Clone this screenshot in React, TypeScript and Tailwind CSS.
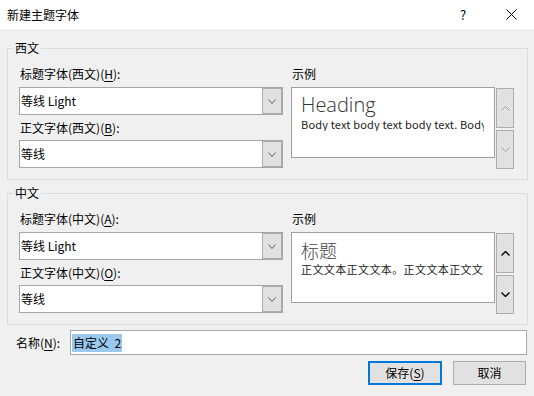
import React from "react";

function ChevronDown({ color = "#5a5a5a", w = 8, h = 5, sw = 1 }: { color?: string; w?: number; h?: number; sw?: number }) {
  return (
    <svg width={w} height={h} viewBox={`0 0 ${w} ${h}`} fill="none">
      <path d={`M0.5 0.5 L${w / 2} ${h - 0.5} L${w - 0.5} 0.5`} stroke={color} strokeWidth={sw} />
    </svg>
  );
}

function ChevronUp({ color = "#5a5a5a", w = 8, h = 5, sw = 1 }: { color?: string; w?: number; h?: number; sw?: number }) {
  return (
    <svg width={w} height={h} viewBox={`0 0 ${w} ${h}`} fill="none">
      <path d={`M0.5 ${h - 0.5} L${w / 2} 0.5 L${w - 0.5} ${h - 0.5}`} stroke={color} strokeWidth={sw} />
    </svg>
  );
}

function Combo({ value }: { value: string }) {
  return (
    <div className="flex h-[28px] border border-[#a6a6a6] bg-white">
      <div className="flex flex-1 items-center pl-[1px] text-[12px] leading-[16px] text-black">{value}</div>
      <div className="flex w-[20px] items-center justify-center border border-[#adadad] bg-[#e1e1e1]">
        <ChevronDown />
      </div>
    </div>
  );
}

function Label({ text, k, rest }: { text: string; k: string; rest: string }) {
  return (
    <div className="pl-[1px] text-[12px] leading-[16px] text-black whitespace-nowrap">
      {text}(<span className="underline underline-offset-2">{k}</span>){rest}
    </div>
  );
}

function Group({
  title,
  l1,
  k1,
  l2,
  k2,
  v1,
  v2,
  heading,
  body,
  headingClass,
  bodyClass,
  active,
}: {
  title: string;
  l1: string;
  k1: string;
  l2: string;
  k2: string;
  v1: string;
  v2: string;
  heading: string;
  body: string;
  headingClass: string;
  bodyClass: string;
  active: boolean;
}) {
  const arrowColor = active ? "#000000" : "#a0a0a0";
  const sw = active ? 1.4 : 1;
  return (
    <fieldset className="m-0 min-w-0 border border-[#dcdcdc] px-0 pb-[10px]">
      <legend className="ml-[5px] px-[2px] text-[12px] leading-[16px] text-black">{title}</legend>
      <div className="flex pl-[11px] pt-[10px]">
        <div className="flex w-[264px] flex-col">
          <Label text={l1} k={k1} rest=":" />
          <div className="mt-[5px]">
            <Combo value={v1} />
          </div>
          <div className="mt-[5px]">
            <Label text={l2} k={k2} rest=":" />
          </div>
          <div className="mt-[4px]">
            <Combo value={v2} />
          </div>
        </div>
        <div className="ml-[8px] flex flex-col">
          <div className="pl-[1px] text-[12px] leading-[16px] text-black">示例</div>
          <div className="mt-[5px] flex">
            <div className="h-[71px] w-[204px] overflow-hidden border border-[#a0a0a0] bg-white pl-[9px] pt-[5px]">
              <div className={headingClass}>{heading}</div>
              <div className={bodyClass}>{body}</div>
            </div>
            <div className="ml-[1px] mt-[1px] flex w-[18px] flex-col gap-[2px]">
              <div className="flex h-[40px] items-center justify-center border border-[#adadad] bg-[#e1e1e1]">
                <ChevronUp color={arrowColor} w={9} h={5} sw={sw} />
              </div>
              <div className="flex h-[39px] items-center justify-center border border-[#adadad] bg-[#e1e1e1]">
                <ChevronDown color={arrowColor} w={9} h={5} sw={sw} />
              </div>
            </div>
          </div>
        </div>
      </div>
    </fieldset>
  );
}

export default function App() {
  return (
    <div className="flex h-[396px] w-[534px] flex-col overflow-hidden bg-[#f0f0f0] font-['Noto_Sans_CJK_SC','Microsoft_YaHei',sans-serif] text-black">
      <div className="flex h-[29px] items-center bg-white">
        <div className="pl-[7px] text-[12px] leading-[16px]">新建主题字体</div>
        <div className="ml-auto flex h-full">
          <div className="flex w-[50px] items-center justify-center text-[13px]">?</div>
          <div className="flex w-[46px] items-center justify-center">
            <svg width="11" height="11" viewBox="0 0 11 11" fill="none">
              <path d="M0.5 0.5 L10.5 10.5 M10.5 0.5 L0.5 10.5" stroke="#000" strokeWidth="1" />
            </svg>
          </div>
        </div>
      </div>

      <div className="flex flex-col pl-[7px] pr-[6px] pt-[11px]">
        <Group
          title="西文"
          l1="标题字体(西文)"
          k1="H"
          l2="正文字体(西文)"
          k2="B"
          v1="等线 Light"
          v2="等线"
          heading="Heading"
          body="Body text body text body text. Body text body text."
          headingClass="text-[20px] leading-[24px] font-light text-[#333333] whitespace-nowrap font-['Open_Sans',sans-serif]"
          bodyClass="w-[183px] overflow-hidden whitespace-nowrap text-[11px] leading-[14px] tracking-[0.15px] text-[#1a1a1a]"
          active={false}
        />
        <div className="mt-[5px]">
          <Group
            title="中文"
            l1="标题字体(中文)"
            k1="A"
            l2="正文字体(中文)"
            k2="O"
            v1="等线 Light"
            v2="等线"
            heading="标题"
            body="正文文本正文文本。正文文本正文文本。"
            headingClass="text-[18px] leading-[24px] font-light text-[#444444] whitespace-nowrap"
            bodyClass="w-[183px] overflow-hidden whitespace-nowrap text-[11px] leading-[14px] tracking-[0.4px] text-[#1a1a1a]"
            active={true}
          />
        </div>

        <div className="mr-[1px] mt-[5px] flex items-center justify-between">
          <div className="pl-[9px] text-[12px] leading-[16px] whitespace-nowrap">
            名称(<span className="underline underline-offset-2">N</span>):
          </div>
          <div className="flex h-[25px] w-[457px] items-center border border-[#a6a6a6] bg-white pl-[1px]">
            <span className="bg-[#99c9ef] px-[1px] text-[12px] leading-[18px] text-black whitespace-pre">自定义  2</span>
          </div>
        </div>

        <div className="mr-[2px] mt-[6px] flex justify-end gap-[11px]">
          <div className="flex h-[24px] w-[74px] items-center justify-center border-2 border-[#0078d7] bg-[#e1e1e1] text-[12px] leading-[16px]">
            保存(<span className="underline underline-offset-2">S</span>)
          </div>
          <div className="flex h-[24px] w-[73px] items-center justify-center border border-[#adadad] bg-[#e1e1e1] text-[12px] leading-[16px]">
            取消
          </div>
        </div>
      </div>
    </div>
  );
}
